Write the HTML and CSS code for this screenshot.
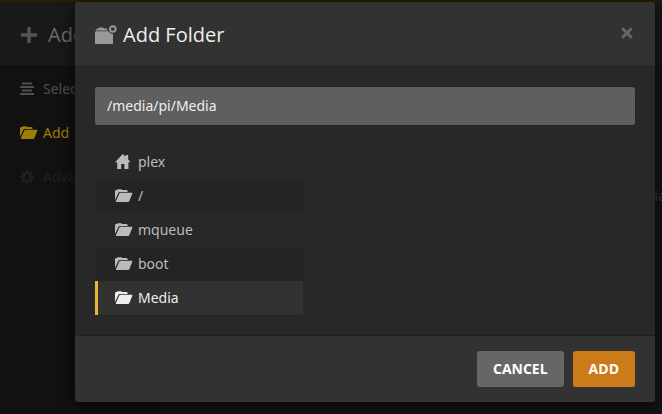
FILE: index.html
```html
<!DOCTYPE html>
<html lang="en">
<head>
<meta charset="utf-8">
<title>Add Folder</title>
<link rel="stylesheet" href="styles.css">
</head>
<body>
<svg class="symbols" aria-hidden="true">
  <symbol id="folder-open" viewBox="0 0 18 14">
    <path d="M0 11V2.2Q0 1 1.2 1H2L2.6.3H6.2L7 1H11.4Q12.6 1 12.6 2.2V3H5Q3.8 3 3.3 4Z"/>
    <path d="M5.6 3.7H16.8Q17.7 3.7 17.3 4.7L14.4 12Q14 13 13 13H1.2Q.6 13 .9 12.2L4.2 4.7Q4.7 3.7 5.6 3.7Z"/>
  </symbol>
</svg>
<div class="page">
  <div class="strip"></div>
  <header class="page-header">
    <svg class="plus" viewBox="0 0 16 16" aria-hidden="true"><path d="M6.3 0h3.4v6.3H16v3.4H9.7V16H6.3V9.7H0V6.3h6.3z"/></svg>
    <span>Add</span>
  </header>
  <div class="page-main">
    <nav class="steps">
      <a class="step" href="#type"><svg viewBox="0 0 18 14" aria-hidden="true"><path d="M2 .5h10v2H2zM0 4h14v2H0zM2 7.5h10v2H2zM0 11h14v2H0z"/></svg>Select</a>
      <a class="step current" href="#folders"><svg viewBox="0 0 18 14" aria-hidden="true"><use href="#folder-open"/></svg>Add</a>
      <a class="step disabled" href="#advanced"><svg viewBox="0 0 18 14" aria-hidden="true"><circle cx="7" cy="7" r="3.8" fill="none" stroke="currentColor" stroke-width="2.6"/><path d="M7 0v3M7 11v3M0 7h3M11 7h3M2 2l2.2 2.2M9.8 9.8L12 12M2 12l2.2-2.2M9.8 4.2L12 2" stroke="currentColor" stroke-width="2.4"/></svg>Advanced</a>
    </nav>
    <div class="page-content">Media</div>
  </div>
</div>

<div class="overlay">
  <section class="modal" role="dialog" aria-labelledby="modal-title">
    <header class="modal-header">
      <svg class="title-icon" viewBox="0 0 22 20" aria-hidden="true">
        <path d="M0 18V7.5Q0 6.3 1.2 6.3H13.5Q15 8.8 18 9V18Q18 19 17 19H1Q0 19 0 18Z"/>
        <path d="M1 5.4Q1 3.6 2.6 3.6H3.4L4.4 2.4H8L9 3.6H12.2Q12.2 4.6 12.8 5.4Z"/>
        <circle cx="17.8" cy="4" r="2.8" fill="none" stroke="currentColor" stroke-width="1.9"/>
      </svg>
      <h1 id="modal-title">Add Folder</h1>
      <button class="close" type="button" aria-label="Close"><svg viewBox="0 0 12 12" aria-hidden="true"><path d="M1.2 1.2l9.6 9.6M10.8 1.2l-9.6 9.6"/></svg></button>
    </header>
    <div class="modal-body">
      <input class="path" type="text" value="/media/pi/Media" aria-label="Folder path">
      <ul class="folders">
        <li><a href="#plex"><svg viewBox="0 0 16 16" aria-hidden="true"><path d="M7.8 0L10.6 2.8V1h2.6v4.5L15.6 8.2H13.4V15H9.4V10H6.2V15H2.2V8.2H0Z"/></svg>plex</a></li>
        <li><a href="#root"><svg viewBox="0 0 18 14" aria-hidden="true"><use href="#folder-open"/></svg>/</a></li>
        <li><a href="#mqueue"><svg viewBox="0 0 18 14" aria-hidden="true"><use href="#folder-open"/></svg>mqueue</a></li>
        <li><a href="#boot"><svg viewBox="0 0 18 14" aria-hidden="true"><use href="#folder-open"/></svg>boot</a></li>
        <li class="selected"><a href="#media"><svg viewBox="0 0 18 14" aria-hidden="true"><use href="#folder-open"/></svg>Media</a></li>
      </ul>
    </div>
    <footer class="modal-footer">
      <button class="btn" type="button">CANCEL</button>
      <button class="btn primary" type="button">ADD</button>
    </footer>
  </section>
</div>
</body>
</html>
```
FILE: styles.css
```css
* { box-sizing: border-box; }

body {
  margin: 0;
  min-height: 100vh;
  overflow: hidden;
  position: relative;
  background: #141414;
  color: #bbb;
  font: 14px/20px "Noto Sans", "Open Sans", sans-serif;
}

a { color: inherit; text-decoration: none; }
svg { fill: currentColor; flex: none; }
.symbols { position: absolute; width: 0; height: 0; }

/* Dimmed page behind the dialog */
.page { display: flex; flex-direction: column; height: 100vh; }
.strip { height: 2px; background: #2b1c08; }
.page-header {
  display: flex;
  align-items: center;
  gap: 11px;
  height: 65px;
  padding: 2px 0 0 21px;
  background: #191919;
  border-bottom: 1px solid #101010;
  color: #6b6b6b;
  font-family: "Open Sans", sans-serif;
  font-size: 20px;
}
.plus { width: 16px; height: 16px; color: #555; }
.page-main { display: flex; flex: 1; }
.steps { width: 158px; background: #111; }
.step {
  display: flex;
  align-items: center;
  gap: 5px;
  height: 44px;
  padding-left: 20px;
  color: #4f4f4f;
}
.step svg { width: 18px; height: 14px; }
.step.current { color: #a07c08; }
.step.disabled { color: #202020; }
.page-content {
  flex: 1;
  margin-right: -4px;
  padding-top: 119px;
  text-align: right;
  color: #383838;
}

/* Dialog */
.overlay {
  position: absolute;
  inset: 0;
  padding: 2px 7px 12px 75px;
}
.modal {
  background: #282828;
  border-radius: 3px;
  box-shadow: 0 4px 16px rgba(0, 0, 0, .7);
  overflow: hidden;
}
.modal-header {
  display: flex;
  align-items: center;
  gap: 6px;
  height: 65px;
  padding: 2px 20px 0;
  background: #323232;
  border-bottom: 1px solid #202020;
}
.title-icon { width: 22px; height: 20px; color: #999; }
.modal-header h1 {
  flex: 1;
  margin: 0;
  color: #eee;
  font: 400 20px/28px "Open Sans", sans-serif;
}
.close {
  display: flex;
  padding: 0 2px 4px;
  border: 0;
  background: none;
  color: #656565;
}
.close svg { width: 12px; height: 12px; stroke: currentColor; stroke-width: 3; }
.modal-body { padding: 20px; }
.path {
  display: block;
  width: 100%;
  height: 38px;
  padding: 0 12px 2px;
  border: 0;
  border-radius: 3px;
  background: #5f5f5f;
  color: #eee;
  font: inherit;
}
.folders {
  width: 208px;
  margin: 20px 0 0;
  padding: 0;
  list-style: none;
}
.folders a {
  display: flex;
  align-items: center;
  gap: 5px;
  height: 34px;
  padding-left: 17px;
  border-left: 3px solid transparent;
}
.folders svg { width: 18px; height: 14px; }
.folders li:first-child svg { width: 16px; height: 16px; margin-right: 2px; }
.folders li:nth-child(even) { background: #242424; }
.folders .selected { background: #323232; color: #eee; }
.folders .selected a { border-left-color: #e5b83b; }
.modal-footer {
  display: flex;
  justify-content: flex-end;
  gap: 9px;
  padding: 15px 20px;
  background: #323232;
  border-top: 1px solid #202020;
}
.btn {
  height: 36px;
  padding: 0 16px;
  border: 0;
  border-radius: 3px;
  background: #666;
  color: #fff;
  font: 700 14px/20px "Open Sans", sans-serif;
}
.btn.primary { background: #cc7b19; }
```
